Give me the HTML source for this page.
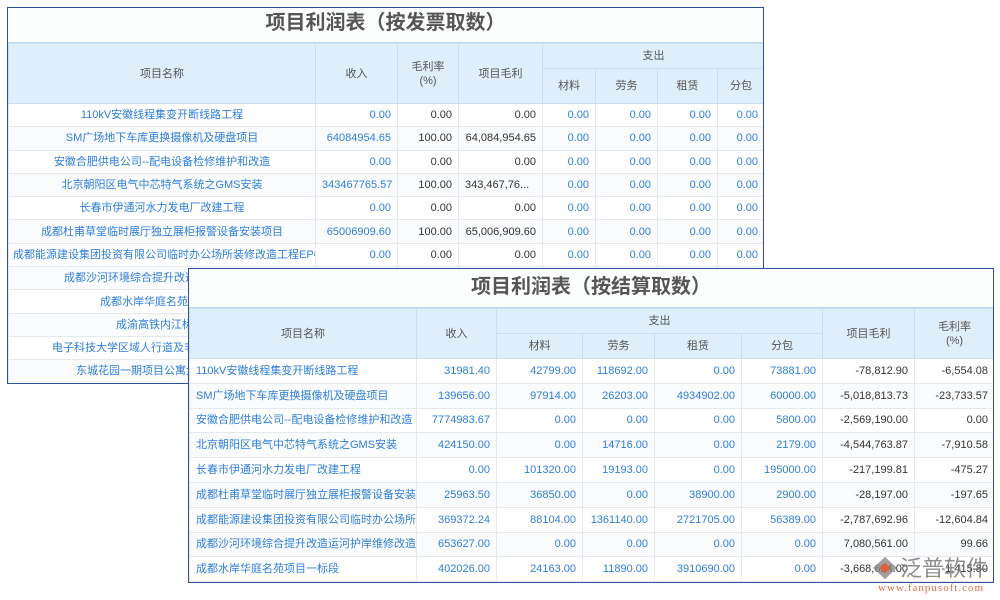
<!DOCTYPE html>
<html><head><meta charset="utf-8"><style>
body{margin:0;width:1000px;height:600px;background:#fff;position:relative;overflow:hidden;font-family:"Liberation Sans","Noto Sans CJK SC",sans-serif;font-size:11px;color:#333}
.box{position:absolute;border:1px solid #2f4f9a;background:#fff;overflow:hidden}
.title{background:#fcfdfd;text-align:center;font-weight:bold;color:#555;font-size:20px;border-bottom:1px solid #b9d6ee}
table{border-collapse:collapse;table-layout:fixed;position:absolute;left:0}
td{border:1px solid #e6e9ec;padding:0 6px;white-space:nowrap;overflow:hidden;text-overflow:clip;line-height:14px}
th{background:#deeefb;border:1px solid #c8dff2;font-weight:normal;color:#555;font-size:11px;padding:0;line-height:14px}
.b{color:#2f7fd8}.r{text-align:right}.c{text-align:center}
tr:nth-child(even) td{background:#fafbfc}
</style></head><body>
<div class="box" style="left:7px;top:7px;width:755px;height:375px">
<div class="title" style="height:34px;line-height:30px">项目利润表（按发票取数）</div>
<table style="top:35px;width:756px">
<colgroup><col style="width:307px"><col style="width:82px"><col style="width:61px"><col style="width:84px"><col style="width:53px"><col style="width:62px"><col style="width:60px"><col style="width:47px"></colgroup>
<tr style="height:25px"><th rowspan="2">项目名称</th><th rowspan="2">收入</th><th rowspan="2">毛利率<br>(%)</th><th rowspan="2">项目毛利</th><th colspan="4">支出</th></tr>
<tr style="height:35px"><th>材料</th><th>劳务</th><th>租赁</th><th>分包</th></tr>
<tr style="height:23.3px"><td class="b c">110kV安徽线程集变开断线路工程</td><td class="b r">0.00</td><td class="r">0.00</td><td class="r">0.00</td><td class="b r">0.00</td><td class="b r">0.00</td><td class="b r">0.00</td><td class="b r">0.00</td></tr>
<tr style="height:23.3px"><td class="b c">SM广场地下车库更换摄像机及硬盘项目</td><td class="b r">64084954.65</td><td class="r">100.00</td><td class="r">64,084,954.65</td><td class="b r">0.00</td><td class="b r">0.00</td><td class="b r">0.00</td><td class="b r">0.00</td></tr>
<tr style="height:23.3px"><td class="b c">安徽合肥供电公司--配电设备检修维护和改造</td><td class="b r">0.00</td><td class="r">0.00</td><td class="r">0.00</td><td class="b r">0.00</td><td class="b r">0.00</td><td class="b r">0.00</td><td class="b r">0.00</td></tr>
<tr style="height:23.3px"><td class="b c">北京朝阳区电气中芯特气系统之GMS安装</td><td class="b r">343467765.57</td><td class="r">100.00</td><td>343,467,76...</td><td class="b r">0.00</td><td class="b r">0.00</td><td class="b r">0.00</td><td class="b r">0.00</td></tr>
<tr style="height:23.3px"><td class="b c">长春市伊通河水力发电厂改建工程</td><td class="b r">0.00</td><td class="r">0.00</td><td class="r">0.00</td><td class="b r">0.00</td><td class="b r">0.00</td><td class="b r">0.00</td><td class="b r">0.00</td></tr>
<tr style="height:23.3px"><td class="b c">成都杜甫草堂临时展厅独立展柜报警设备安装项目</td><td class="b r">65006909.60</td><td class="r">100.00</td><td class="r">65,006,909.60</td><td class="b r">0.00</td><td class="b r">0.00</td><td class="b r">0.00</td><td class="b r">0.00</td></tr>
<tr style="height:23.3px"><td class="b" style="padding-left:4px">成都能源建设集团投资有限公司临时办公场所装修改造工程EPC总</td><td class="b r">0.00</td><td class="r">0.00</td><td class="r">0.00</td><td class="b r">0.00</td><td class="b r">0.00</td><td class="b r">0.00</td><td class="b r">0.00</td></tr>
<tr style="height:23.3px"><td class="b" style="padding-left:55px">成都沙河环境综合提升改造运河护岸</td><td></td><td></td><td></td><td></td><td></td><td></td><td></td></tr>
<tr style="height:23.3px"><td class="b" style="padding-left:91px">成都水岸华庭名苑项目一标段</td><td></td><td></td><td></td><td></td><td></td><td></td><td></td></tr>
<tr style="height:23.3px"><td class="b" style="padding-left:107px">成渝高铁内江标段工程</td><td></td><td></td><td></td><td></td><td></td><td></td><td></td></tr>
<tr style="height:23.3px"><td class="b" style="padding-left:43px">电子科技大学区域人行道及非机动车道</td><td></td><td></td><td></td><td></td><td></td><td></td><td></td></tr>
<tr style="height:23.3px"><td class="b" style="padding-left:67px">东城花园一期项目公寓大楼</td><td></td><td></td><td></td><td></td><td></td><td></td><td></td></tr>
</table></div>

<div class="box" style="left:188px;top:268px;width:804px;height:313px">
<div class="title" style="height:38px;line-height:36px">项目利润表（按结算取数）</div>
<table style="top:39px;width:805px">
<colgroup><col style="width:227px"><col style="width:80px"><col style="width:86px"><col style="width:72px"><col style="width:87px"><col style="width:81px"><col style="width:92px"><col style="width:80px"></colgroup>
<tr style="height:25px"><th rowspan="2">项目名称</th><th rowspan="2">收入</th><th colspan="4">支出</th><th rowspan="2">项目毛利</th><th rowspan="2">毛利率<br>(%)</th></tr>
<tr style="height:25px"><th>材料</th><th>劳务</th><th>租赁</th><th>分包</th></tr>
<tr style="height:24.8px"><td class="b">110kV安徽线程集变开断线路工程</td><td class="b r">31981.40</td><td class="b r">42799.00</td><td class="b r">118692.00</td><td class="b r">0.00</td><td class="b r">73881.00</td><td class="r">-78,812.90</td><td class="r">-6,554.08</td></tr>
<tr style="height:24.8px"><td class="b">SM广场地下车库更换摄像机及硬盘项目</td><td class="b r">139656.00</td><td class="b r">97914.00</td><td class="b r">26203.00</td><td class="b r">4934902.00</td><td class="b r">60000.00</td><td class="r">-5,018,813.73</td><td class="r">-23,733.57</td></tr>
<tr style="height:24.8px"><td class="b">安徽合肥供电公司--配电设备检修维护和改造</td><td class="b r">7774983.67</td><td class="b r">0.00</td><td class="b r">0.00</td><td class="b r">0.00</td><td class="b r">5800.00</td><td class="r">-2,569,190.00</td><td class="r">0.00</td></tr>
<tr style="height:24.8px"><td class="b">北京朝阳区电气中芯特气系统之GMS安装</td><td class="b r">424150.00</td><td class="b r">0.00</td><td class="b r">14716.00</td><td class="b r">0.00</td><td class="b r">2179.00</td><td class="r">-4,544,763.87</td><td class="r">-7,910.58</td></tr>
<tr style="height:24.8px"><td class="b">长春市伊通河水力发电厂改建工程</td><td class="b r">0.00</td><td class="b r">101320.00</td><td class="b r">19193.00</td><td class="b r">0.00</td><td class="b r">195000.00</td><td class="r">-217,199.81</td><td class="r">-475.27</td></tr>
<tr style="height:24.8px"><td class="b">成都杜甫草堂临时展厅独立展柜报警设备安装</td><td class="b r">25963.50</td><td class="b r">36850.00</td><td class="b r">0.00</td><td class="b r">38900.00</td><td class="b r">2900.00</td><td class="r">-28,197.00</td><td class="r">-197.65</td></tr>
<tr style="height:24.8px"><td class="b">成都能源建设集团投资有限公司临时办公场所</td><td class="b r">369372.24</td><td class="b r">88104.00</td><td class="b r">1361140.00</td><td class="b r">2721705.00</td><td class="b r">56389.00</td><td class="r">-2,787,692.96</td><td class="r">-12,604.84</td></tr>
<tr style="height:24.8px"><td class="b">成都沙河环境综合提升改造运河护岸维修改造</td><td class="b r">653627.00</td><td class="b r">0.00</td><td class="b r">0.00</td><td class="b r">0.00</td><td class="b r">0.00</td><td class="r">7,080,561.00</td><td class="r">99.66</td></tr>
<tr style="height:24.8px"><td class="b">成都水岸华庭名苑项目一标段</td><td class="b r">402026.00</td><td class="b r">24163.00</td><td class="b r">11890.00</td><td class="b r">3910690.00</td><td class="b r">0.00</td><td class="r">-3,668,624.00</td><td class="r">-1,415.80</td></tr>
</table></div>

<div style="position:absolute;left:872px;top:553px;width:128px;height:44px;white-space:nowrap">
<svg width="26" height="24" style="position:absolute;left:0;top:3px" viewBox="0 0 28 26"><path d="M14 1 L27 13 L14 25 L1 13 Z" fill="#888" opacity=".8"/><path d="M8 13 L14 7 L20 13 L14 19Z" fill="#e0603a"/></svg>
<div style="position:absolute;left:28px;top:0;font-size:22px;line-height:28px;color:#7a7a7a;font-family:'Noto Sans CJK SC',sans-serif;opacity:.85">泛普软件</div>
<div style="position:absolute;left:6px;top:29px;font-size:11px;color:#e0704a;font-family:'Liberation Serif',serif;letter-spacing:1px">www.fanpusoft.com</div>
</div>
</body></html>
